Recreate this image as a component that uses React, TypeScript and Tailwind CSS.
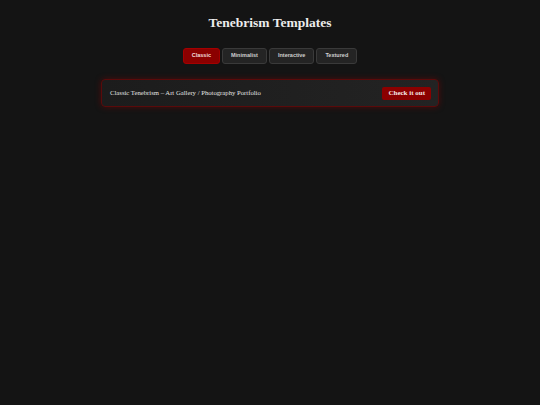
import { useState } from 'react';

const tabs = ['Classic', 'Minimalist', 'Interactive', 'Textured'];

export default function App() {
  const [active, setActive] = useState('Classic');

  return (
    <div className="min-h-[405px] bg-[#141414] pt-[15px] font-['Liberation_Serif',serif] text-[#e6e6e6]">
      <h1 className="text-center text-[13.5px] font-bold leading-[16px] text-[#ececec]">Tenebrism Templates</h1>

      <div className="mt-[17px] flex justify-center gap-[2px]">
        {tabs.map((t) => (
          <button
            key={t}
            onClick={() => setActive(t)}
            className={
              "h-[16px] rounded-[3px] border px-[8px] font-['Liberation_Sans',sans-serif] text-[5.5px] font-bold leading-none " +
              (active === t
                ? 'border-[#a40000] bg-[#8b0000] text-[#f2dede]'
                : 'border-[#3a3a3a] bg-[#242424] text-[#cfcfcf]')
            }
          >
            {t}
          </button>
        ))}
      </div>

      <div className="mx-auto mt-[15px] flex h-[28px] w-[338px] items-center justify-between rounded-[4px] border border-[#5a0a0a] bg-gradient-to-r from-[#1c1c1c] to-[#232323] pl-[8px] pr-[7px] shadow-[0_0_6px_rgba(139,0,0,0.45)]">
        <span className="text-[6.7px] text-[#e2e2e2]">Classic Tenebrism – Art Gallery / Photography Portfolio</span>
        <button className="h-[13px] rounded-[2px] bg-[#8b0000] px-[6px] text-[7px] font-bold leading-none text-[#f3e6e6]">
          Check it out
        </button>
      </div>
    </div>
  );
}
